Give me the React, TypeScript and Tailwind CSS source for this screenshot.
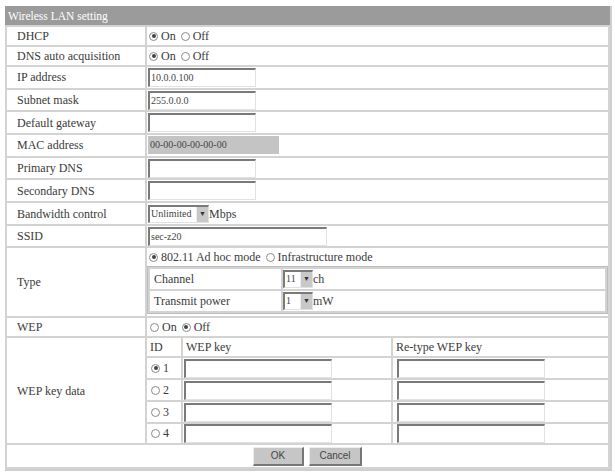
import React from "react";

function Radio({ checked, label }: { checked?: boolean; label: string }) {
  return (
    <span className="flex items-center gap-[3px] mr-[5px]">
      <span className="w-[9px] h-[9px] rounded-full border border-[#8a8a8a] bg-white flex items-center justify-center">
        {checked && <span className="w-[4px] h-[4px] rounded-full bg-[#444]" />}
      </span>
      <span className="leading-[13px]">{label}</span>
    </span>
  );
}

function Radios({ children }: { children: React.ReactNode }) {
  return <div className="flex items-center pl-[1px]">{children}</div>;
}

function TextBox({ value = "", width = "w-[108px]", gray }: { value?: string; width?: string; gray?: boolean }) {
  if (gray) {
    return (
      <div className={`${width} h-[18px] bg-[#c4c4c4] text-[10px] text-[#444] leading-[18px] px-[2px]`}>{value}</div>
    );
  }
  return (
    <div
      className={`${width} h-[19px] bg-white border-t-2 border-l-2 border-[#7a7a7a] border-b border-r border-b-[#e2e2e2] border-r-[#e2e2e2] text-[10px] text-[#444] leading-[15px] px-[1px]`}
    >
      {value}
    </div>
  );
}

function Select({ value, width }: { value: string; width: string }) {
  return (
    <div className={`${width} h-[18px] flex border-t-2 border-l-2 border-[#7a7a7a] border-b border-r border-b-[#e2e2e2] border-r-[#e2e2e2] bg-white`}>
      <span className="flex-1 text-[10px] leading-[14px] px-[1px] text-[#444]">{value}</span>
      <span className="w-[12px] bg-[#c8c8c8] border-l border-[#eee] flex items-center justify-center text-[7px] text-[#333]">▼</span>
    </div>
  );
}

const rows: { label: string; h: string; body: React.ReactNode }[] = [
  { label: "DHCP", h: "h-[18px]", body: <Radios><Radio checked label="On" /><Radio label="Off" /></Radios> },
  { label: "DNS auto acquisition", h: "h-[17px]", body: <Radios><Radio checked label="On" /><Radio label="Off" /></Radios> },
  { label: "IP address", h: "h-[20.7px]", body: <TextBox value="10.0.0.100" /> },
  { label: "Subnet mask", h: "h-[20.7px]", body: <TextBox value="255.0.0.0" /> },
  { label: "Default gateway", h: "h-[20.7px]", body: <TextBox /> },
  { label: "MAC address", h: "h-[20.7px]", body: <TextBox gray value="00-00-00-00-00-00" width="w-[131px]" /> },
  { label: "Primary DNS", h: "h-[20.7px]", body: <TextBox /> },
  { label: "Secondary DNS", h: "h-[20.7px]", body: <TextBox /> },
  {
    label: "Bandwidth control",
    h: "h-[21px]",
    body: (
      <div className="flex items-center">
        <Select value="Unlimited" width="w-[61px]" />
        <span>Mbps</span>
      </div>
    ),
  },
  { label: "SSID", h: "h-[20px]", body: <TextBox value="sec-z20" width="w-[179px]" /> },
];

const btn =
  "h-[19px] bg-[#c6c6c6] border-r-2 border-b-2 border-[#777] border-t border-l border-t-[#eee] border-l-[#eee] text-[10px] text-[#444]";

export default function App() {
  return (
    <div
      className="bg-white min-h-[473px] pt-[6px] pl-[5px] text-[12px] text-[#3a3a3a]"
      style={{ fontFamily: '"Liberation Serif", "Times New Roman", serif' }}
    >
      <div className="w-[607px] border-r-2 border-b-2 border-[#cfcfcf]">
        <div className="h-[20px] bg-[#9b9b9b] text-white px-[3px] leading-[20px] text-[11.5px]">Wireless LAN setting</div>
        <table className="w-full border-separate border-spacing-[2px] bg-[#d3d3d3] -mt-[1px]">
          <tbody>
            {rows.map((r) => (
              <tr key={r.label} className={r.h}>
                <td className="w-[138px] bg-white pl-[10px] p-0">{r.label}</td>
                <td className="bg-white p-0 pl-[1px]">{r.body}</td>
              </tr>
            ))}

            <tr>
              <td className="bg-white pl-[10px]">Type</td>
              <td className="bg-white p-0">
                <div className="h-[18px] flex items-center pl-[2px]">
                  <Radio checked label="802.11 Ad hoc mode" />
                  <Radio label="Infrastructure mode" />
                </div>
                <table className="w-full border-separate border-spacing-[2px] bg-[#d3d3d3] border border-[#bcbcbc]">
                  <tbody>
                    <tr className="h-[20px]">
                      <td className="w-[131px] bg-white pl-[4px]">Channel</td>
                      <td className="bg-white">
                        <div className="flex items-center">
                          <Select value="11" width="w-[30px]" />
                          <span>ch</span>
                        </div>
                      </td>
                    </tr>
                    <tr className="h-[20px]">
                      <td className="bg-white pl-[4px]">Transmit power</td>
                      <td className="bg-white">
                        <div className="flex items-center">
                          <Select value="1" width="w-[30px]" />
                          <span>mW</span>
                        </div>
                      </td>
                    </tr>
                  </tbody>
                </table>
                <div className="h-[2px]" />
              </td>
            </tr>

            <tr className="h-[18px]">
              <td className="bg-white pl-[10px]">WEP</td>
              <td className="bg-white pl-[2px]">
                <Radios>
                  <Radio label="On" />
                  <Radio checked label="Off" />
                </Radios>
              </td>
            </tr>

            <tr>
              <td className="bg-white pl-[10px]">WEP key data</td>
              <td className="bg-white p-0">
                <table className="border-separate border-spacing-[2px] bg-[#d3d3d3] -m-[2px] w-[calc(100%+4px)]">
                  <tbody>
                    <tr className="h-[17px]">
                      <td className="w-[34px] bg-white pl-[3px]">ID</td>
                      <td className="w-[208px] bg-white pl-[3px]">WEP key</td>
                      <td className="bg-white pl-[3px]">Re-type WEP key</td>
                    </tr>
                    {[1, 2, 3, 4].map((n) => (
                      <tr key={n} className={n === 4 ? "h-[19px]" : "h-[20px]"}>
                        <td className="bg-white pl-[3px]">
                          <Radios>
                            <Radio checked={n === 1} label={String(n)} />
                          </Radios>
                        </td>
                        <td className="bg-white pl-[1px]">
                          <TextBox width="w-[148px]" />
                        </td>
                        <td className="bg-white pl-[4px]">
                          <TextBox width="w-[148px]" />
                        </td>
                      </tr>
                    ))}
                  </tbody>
                </table>
              </td>
            </tr>

            <tr className="h-[22px]">
              <td colSpan={2} className="bg-white">
                <div className="flex justify-center gap-[5px]" style={{ fontFamily: '"Liberation Sans", Arial, sans-serif' }}>
                  <button className={`${btn} w-[51px]`}>OK</button>
                  <button className={`${btn} w-[53px]`}>Cancel</button>
                </div>
              </td>
            </tr>
          </tbody>
        </table>
      </div>
    </div>
  );
}
